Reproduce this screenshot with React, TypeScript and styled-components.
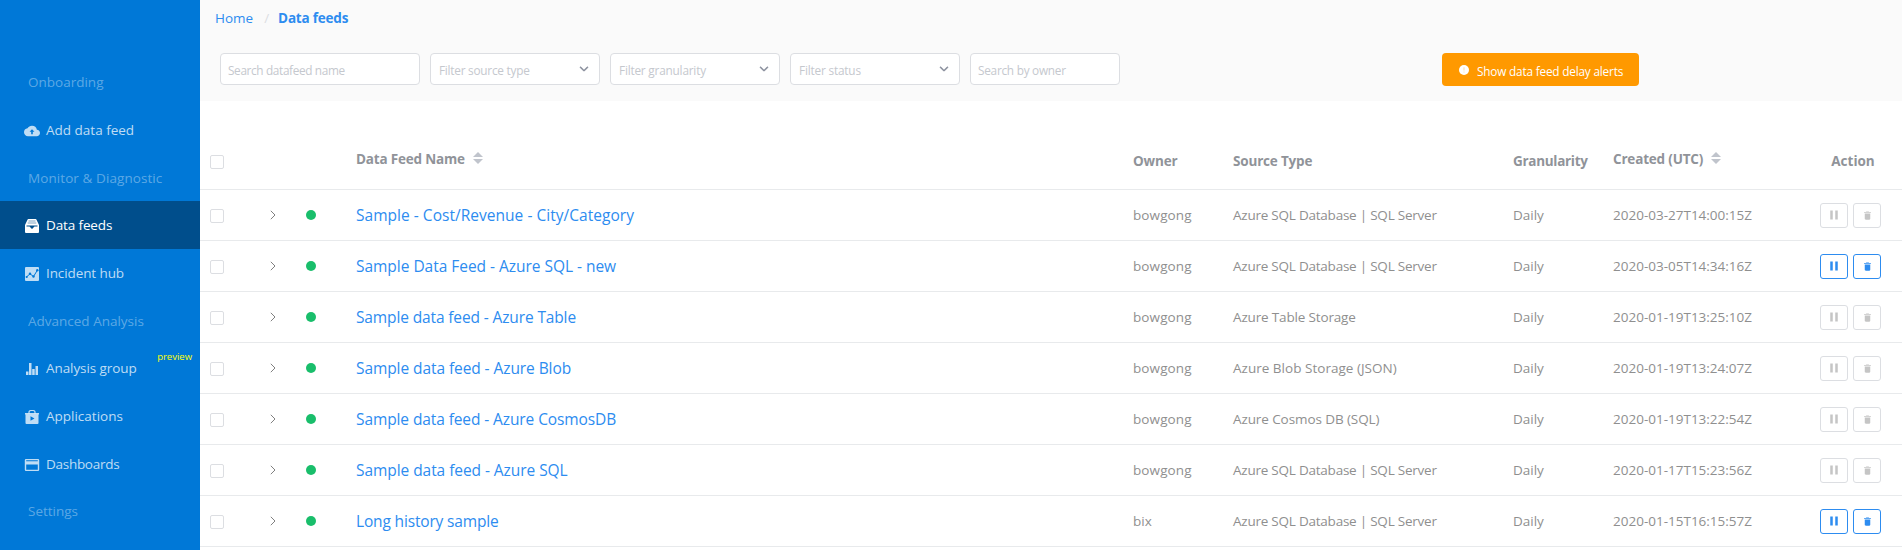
import React from "react";
import styled, { createGlobalStyle, css } from "styled-components";
import { IoIosArrowDown, IoMdPause, IoMdTrash } from "react-icons/io";

const GlobalStyle = createGlobalStyle`
  * { box-sizing: border-box; }
  body {
    margin: 0;
    background: #fff;
    font-family: "Open Sans", "Noto Sans", sans-serif;
    font-size: 13.5px;
    overflow: hidden;
  }
`;

const Page = styled.div`
  display: flex;
  height: 550px;
  overflow: hidden;
`;

const Sidebar = styled.nav`
  flex: 0 0 200px;
  padding-top: 58.5px;
  background: #0078d7;
`;

const NavSection = styled.div`
  display: flex;
  align-items: center;
  height: 47.67px;
  padding-left: 28px;
  color: rgba(255, 255, 255, 0.37);
  white-space: nowrap;
`;

const NavItem = styled.a<{ $active?: boolean }>`
  display: flex;
  align-items: center;
  gap: 6px;
  height: 47.67px;
  padding-left: 24px;
  position: relative;
  white-space: nowrap;
  color: ${(p) => (p.$active ? "#fff" : "rgba(255, 255, 255, 0.75)")};
  background: ${(p) => (p.$active ? "#004e8c" : "transparent")};

  svg {
    flex: none;
    margin-top: 2px;
  }
`;

const Tracked = styled.span<{ $ls: number }>`
  letter-spacing: ${(p) => p.$ls}px;
`;

const PreviewTag = styled.span`
  position: absolute;
  right: 8px;
  top: 6px;
  font: 9.5px/14px "Open Sans", sans-serif;
  color: #ff0;
`;

const Main = styled.main`
  flex: 1;
  min-width: 0;
`;

const TopBar = styled.header`
  height: 101px;
  background: #fafafa;
`;

const Breadcrumb = styled.div`
  display: flex;
  align-items: center;
  height: 35px;
  padding-left: 15px;
  color: #2d8cf0;
`;

const Slash = styled.span`
  margin: 0 9px 0 11px;
  color: #dcdee2;
`;

const Current = styled.b`
  font-weight: 700;
  letter-spacing: -0.2px;
`;

const Filters = styled.div`
  display: flex;
  gap: 10px;
  padding: 18px 0 0 20px;
`;

const Field = styled.div<{ $width: number; $select?: boolean }>`
  display: flex;
  align-items: center;
  justify-content: space-between;
  width: ${(p) => p.$width}px;
  height: 32px;
  padding: 1px ${(p) => (p.$select ? 9 : 7)}px 0 ${(p) => (p.$select ? 8 : 7)}px;
  border: 1px solid #dcdee2;
  border-radius: 4px;
  background: #fff;
  color: #c5c8ce;
  font-size: 11.8px;

  svg {
    margin: -2px 0 0;
    color: #808695;
    stroke: currentColor;
    stroke-width: 20;
  }
`;

const AlertButton = styled.button`
  display: flex;
  align-items: center;
  gap: 8px;
  width: 197px;
  height: 33px;
  margin-left: 312px;
  padding: 2px 0 0 17px;
  border: 0;
  border-radius: 4px;
  background: #f90;
  color: #fff;
  font: 11.8px "Open Sans", sans-serif;
  letter-spacing: -0.19px;
  white-space: nowrap;

  svg {
    margin-top: -2px;
  }
`;

const Table = styled.div`
  padding-top: 33px;
`;

const rowGrid = css`
  display: grid;
  grid-template-columns: 56px 34px 42px 777px 100px 280px 100px 215px 98px;
  align-items: center;
  border-bottom: 1px solid #e8eaec;
`;

const HeadRow = styled.div`
  ${rowGrid}
  height: 56px;
  color: #909399;
  font-weight: 700;
  letter-spacing: -0.18px;
`;

const Row = styled.div`
  ${rowGrid}
  height: 51px;
  color: #8f8f8f;
`;

const Cell = styled.div<{ $center?: boolean }>`
  display: flex;
  align-items: center;
  justify-content: ${(p) => (p.$center ? "center" : "flex-start")};
  padding-left: ${(p) => (p.$center ? 0 : 24)}px;
  white-space: nowrap;
`;

const HeadCell = styled(Cell)<{ $sortable?: boolean }>`
  padding-bottom: ${(p) => (p.$sortable ? 5 : 1)}px;
`;

const CheckCell = styled.div<{ $head?: boolean }>`
  padding: ${(p) => (p.$head ? 0 : 2)}px 0 0 10px;
`;

const Checkbox = styled.div`
  width: 14px;
  height: 14px;
  border: 1px solid #dcdee2;
  border-radius: 2px;
`;

const Dot = styled.span`
  width: 10px;
  height: 10px;
  border-radius: 50%;
  background: #19be6b;
`;

const FeedLink = styled.a<{ $ls: number }>`
  color: #2d8cf0;
  font-size: 15.5px;
  letter-spacing: ${(p) => p.$ls}px;
`;

const SortIcon = styled.span`
  display: inline-flex;
  flex-direction: column;
  margin-left: 8px;
  color: #c0c4cc;
`;

const SortHalf = styled.svg`
  display: block;
  width: 10px;
  height: 5px;
  margin-bottom: 2px;
  fill: currentColor;
`;

const Actions = styled.div`
  display: flex;
  padding-left: 16px;
  gap: 5px;
`;

const IconButton = styled.button<{ $enabled: boolean }>`
  display: flex;
  align-items: center;
  justify-content: center;
  width: 28px;
  height: 25px;
  padding: 0;
  border: 1px solid ${(p) => (p.$enabled ? "#2d8cf0" : "#dcdee2")};
  border-radius: 3px;
  background: #fff;
  color: ${(p) => (p.$enabled ? "#2d8cf0" : "#c5c5c5")};
`;

const CloudIcon = () => (
  <svg width="16" height="16" viewBox="0 0 24 24" fill="currentColor">
    <path d="M19.35 10.04A7.49 7.49 0 0 0 12 4C9.11 4 6.6 5.64 5.35 8.04A5.994 5.994 0 0 0 0 14c0 3.31 2.69 6 6 6h13c2.76 0 5-2.24 5-5 0-2.64-2.05-4.78-4.65-4.96zM13.2 13v4h-2.400v-4H8.300L12 9.200l3.700 3.800z" />
  </svg>
);

const TrayIcon = () => (
  <svg width="16" height="16" viewBox="0 0 16 16" fill="currentColor">
    <path d="M4.500 1h7a1 1 0 0 1 1 .8L15 7v7a1 1 0 0 1-1 1H2a1 1 0 0 1-1-1V7l2.500-5.200a1 1 0 0 1 1-.8z" />
    <path d="M4.500 3h7M3.700 5h8.600" stroke="#004e8c" strokeWidth="1" opacity=".5" />
    <path d="M2.500 7.500h11v1h-3L8 11 5.500 8.500h-3z" fill="#004e8c" />
  </svg>
);

const TrendIcon = () => (
  <svg width="16" height="16" viewBox="0 0 16 16">
    <rect x="1" y="1" width="14" height="14" rx="1" fill="currentColor" />
    <path d="M2.500 11 6 7.800l3.500 2.700L13.500 4" fill="none" stroke="#0078d7" strokeWidth="1" />
    <g fill="#0078d7">
      <circle cx="2.700" cy="11" r="1.100" />
      <circle cx="6" cy="7.800" r="1.200" />
      <circle cx="9.500" cy="10.500" r="1.200" />
      <circle cx="13.300" cy="4.200" r="1.200" />
    </g>
  </svg>
);

const BarsIcon = () => (
  <svg width="16" height="16" viewBox="0 0 16 16" fill="currentColor">
    <path d="M2 10.500h2.500V14H2zM5 2h2.500v12H5zM8.200 8h2.500v6H8.200zM11.500 5H14v9h-2.500z" />
  </svg>
);

const BagIcon = () => (
  <svg width="16" height="16" viewBox="0 0 16 16" fill="currentColor">
    <path d="M5 4.500V3.200a1.700 1.700 0 0 1 1.700-1.700h2.600A1.700 1.700 0 0 1 11 3.200v1.300" fill="none" stroke="currentColor" strokeWidth="1.200" />
    <path fillRule="evenodd" d="M1 4h14v1.500h-.5V14a1 1 0 0 1-1 1h-11a1 1 0 0 1-1-1V5.500H1zM6.500 7.200v4.600l4-2.300z" />
  </svg>
);

const CardIcon = () => (
  <svg width="16" height="16" viewBox="0 0 16 16" fill="currentColor">
    <path fillRule="evenodd" d="M2 2h12a1.200 1.200 0 0 1 1.200 1.200v9.600A1.200 1.200 0 0 1 14 14H2a1.200 1.200 0 0 1-1.200-1.200V3.200A1.200 1.200 0 0 1 2 2zM2.200 3.200v1.100h11.600V3.200zM2.200 7.500v5.200h11.600V7.500z" />
  </svg>
);

const AlertIcon = () => (
  <svg width="10" height="10" viewBox="0 0 10 10">
    <circle cx="5" cy="5" r="5" fill="#fff" />
    <path d="M5 2.300v3.200M5 6.600v.9" stroke="#f90" strokeWidth=".6" opacity=".6" />
  </svg>
);

const ExpandIcon = () => (
  <svg width="6" height="10" viewBox="0 0 6 10" fill="none" stroke="#808080" strokeWidth="1">
    <path d="M.8.8 5 5 .8 9.200" />
  </svg>
);

const Sorter = () => (
  <SortIcon>
    <SortHalf viewBox="0 0 10 5"><path d="M5 0l5 5H0z" /></SortHalf>
    <SortHalf viewBox="0 0 10 5"><path d="M0 0h10L5 5z" /></SortHalf>
  </SortIcon>
);

const tracking: Record<string, number> = {
  "Azure SQL Database | SQL Server": -0.23,
  "Azure Table Storage": -0.16,
  "Azure Blob Storage (JSON)": 0.02,
  "Azure Cosmos DB (SQL)": -0.09,
  bowgong: 0.1,
};

const feeds = [
  { name: "Sample - Cost/Revenue - City/Category", ls: 0.03, owner: "bowgong", source: "Azure SQL Database | SQL Server", created: "2020-03-27T14:00:15Z", enabled: false },
  { name: "Sample Data Feed - Azure SQL - new", ls: -0.03, owner: "bowgong", source: "Azure SQL Database | SQL Server", created: "2020-03-05T14:34:16Z", enabled: true },
  { name: "Sample data feed - Azure Table", ls: -0.13, owner: "bowgong", source: "Azure Table Storage", created: "2020-01-19T13:25:10Z", enabled: false },
  { name: "Sample data feed - Azure Blob", ls: -0.08, owner: "bowgong", source: "Azure Blob Storage (JSON)", created: "2020-01-19T13:24:07Z", enabled: false },
  { name: "Sample data feed - Azure CosmosDB", ls: -0.1, owner: "bowgong", source: "Azure Cosmos DB (SQL)", created: "2020-01-19T13:22:54Z", enabled: false },
  { name: "Sample data feed - Azure SQL", ls: -0.06, owner: "bowgong", source: "Azure SQL Database | SQL Server", created: "2020-01-17T15:23:56Z", enabled: false },
  { name: "Long history sample", ls: -0.16, owner: "bix", source: "Azure SQL Database | SQL Server", created: "2020-01-15T16:15:57Z", enabled: true },
];

export default function App() {
  return (
    <>
      <GlobalStyle />
      <Page>
        <Sidebar>
          <NavSection>Onboarding</NavSection>
          <NavItem><CloudIcon />Add data feed</NavItem>
          <NavSection><Tracked $ls={0.08}>Monitor &amp; Diagnostic</Tracked></NavSection>
          <NavItem $active><TrayIcon /><Tracked $ls={-0.13}>Data feeds</Tracked></NavItem>
          <NavItem><TrendIcon /><Tracked $ls={-0.1}>Incident hub</Tracked></NavItem>
          <NavSection>Advanced Analysis</NavSection>
          <NavItem><BarsIcon /><Tracked $ls={-0.08}>Analysis group</Tracked><PreviewTag>preview</PreviewTag></NavItem>
          <NavItem><BagIcon />Applications</NavItem>
          <NavItem><CardIcon /><Tracked $ls={-0.28}>Dashboards</Tracked></NavItem>
          <NavSection>Settings</NavSection>
        </Sidebar>
        <Main>
          <TopBar>
            <Breadcrumb>
              <span>Home</span>
              <Slash>/</Slash>
              <Current>Data feeds</Current>
            </Breadcrumb>
            <Filters>
              <Field $width={200}><Tracked $ls={-0.35}>Search datafeed name</Tracked></Field>
              <Field $width={170} $select><Tracked $ls={-0.24}>Filter source type</Tracked><IoIosArrowDown size={12} /></Field>
              <Field $width={170} $select><Tracked $ls={-0.2}>Filter granularity</Tracked><IoIosArrowDown size={12} /></Field>
              <Field $width={170} $select><Tracked $ls={-0.18}>Filter status</Tracked><IoIosArrowDown size={12} /></Field>
              <Field $width={150}><Tracked $ls={-0.25}>Search by owner</Tracked></Field>
              <AlertButton><AlertIcon />Show data feed delay alerts</AlertButton>
            </Filters>
          </TopBar>
          <Table>
            <HeadRow>
              <CheckCell $head><Checkbox /></CheckCell>
              <span />
              <span />
              <HeadCell $sortable>Data Feed Name<Sorter /></HeadCell>
              <HeadCell>Owner</HeadCell>
              <HeadCell>Source Type</HeadCell>
              <HeadCell><Tracked $ls={-0.3}>Granularity</Tracked></HeadCell>
              <HeadCell $sortable>Created (UTC)<Sorter /></HeadCell>
              <HeadCell $center><Tracked $ls={0}>Action</Tracked></HeadCell>
            </HeadRow>
            {feeds.map((f) => (
              <Row key={f.name}>
                <CheckCell><Checkbox /></CheckCell>
                <Cell $center><ExpandIcon /></Cell>
                <Cell $center><Dot /></Cell>
                <Cell><FeedLink $ls={f.ls}>{f.name}</FeedLink></Cell>
                <Cell><Tracked $ls={tracking[f.owner] ?? 0}>{f.owner}</Tracked></Cell>
                <Cell><Tracked $ls={tracking[f.source] ?? 0}>{f.source}</Tracked></Cell>
                <Cell>Daily</Cell>
                <Cell>{f.created}</Cell>
                <Actions>
                  <IconButton $enabled={f.enabled}><IoMdPause size={12} /></IconButton>
                  <IconButton $enabled={f.enabled}><IoMdTrash size={11} /></IconButton>
                </Actions>
              </Row>
            ))}
          </Table>
        </Main>
      </Page>
    </>
  );
}
